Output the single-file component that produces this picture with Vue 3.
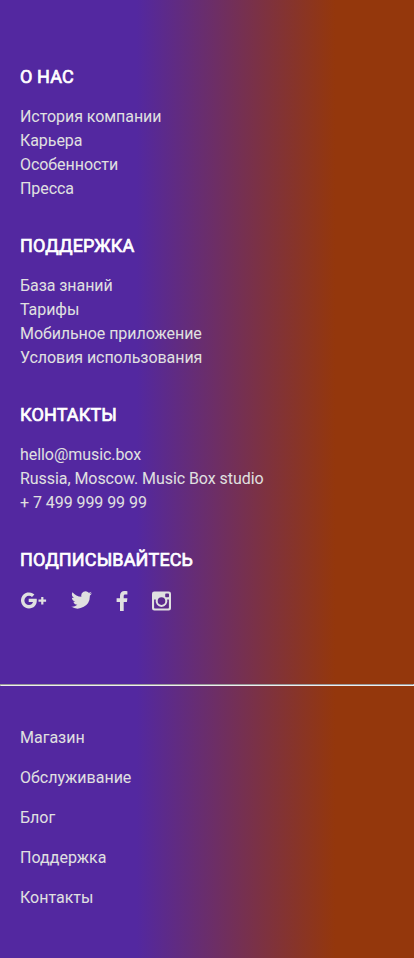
<script setup>
const groups = [
  { title: 'О нас', items: ['История компании', 'Карьера', 'Особенности', 'Пресса'] },
  { title: 'Поддержка', items: ['База знаний', 'Тарифы', 'Мобильное приложение', 'Условия использования'] },
  { title: 'Контакты', items: ['hello@music.box', 'Russia, Moscow. Music Box studio', '+ 7 499 999 99 99'] },
]
const nav = ['Магазин', 'Обслуживание', 'Блог', 'Поддержка', 'Контакты']
</script>

<template>
  <footer class="footer">
    <div class="top">
      <section v-for="g in groups" :key="g.title" class="group">
        <h4>{{ g.title }}</h4>
        <ul><li v-for="i in g.items" :key="i">{{ i }}</li></ul>
      </section>
      <section>
        <h4>Подписывайтесь</h4>
        <div class="social">
          <svg class="google" width="27" height="17" viewBox="0 0 27 17"><path d="M8.700 6.800v3.300h4.300C12.500 12 11 13 9 13A4.600 4.600 0 0 1 9 3.800c1.200 0 2.200.4 3 1.100l2.400-2.400A8 8 0 1 0 9 16.400c4.700 0 7.800-3.200 7.800-7.900 0-.6 0-1.200-.1-1.700ZM21.200 4.900v2.600h-2.700v2.200h2.700v2.700h2.200V9.700h2.700V7.500h-2.700V4.900Z"/></svg>
          <svg class="twitter" width="21" height="18" viewBox="0 0 24 20"><path d="M24 2.400c-.9.400-1.800.700-2.800.800 1-.6 1.800-1.600 2.200-2.700-1 .6-2 1-3.100 1.200A4.900 4.900 0 0 0 11.900 6.200C7.800 6 4.200 4 1.700 1c-1.300 2.200-.7 5.100 1.500 6.600-.8 0-1.600-.2-2.200-.6-.1 2.300 1.600 4.400 3.900 4.900-.7.200-1.500.2-2.200.1.600 2 2.400 3.400 4.600 3.400A9.900 9.900 0 0 1 0 17.500 14 14 0 0 0 21.500 5c1-.7 1.800-1.600 2.500-2.600Z"/></svg>
          <svg class="facebook" width="12" height="20" viewBox="0 0 12 20"><path d="M4 20v-9H.6V7.300H4V4.700C4 1.600 5.800 0 8.500 0c1.400 0 2.500.1 2.900.2v3.300H9.500c-1.500 0-1.800.7-1.800 1.700v2.100h3.700l-.5 3.700H7.700v9Z"/></svg>
          <svg class="instagram" width="19" height="20" viewBox="0 0 19 20"><path fill-rule="evenodd" d="M2.300.5h14.400A2.300 2.300 0 0 1 19 2.800v14.400a2.300 2.300 0 0 1-2.300 2.300H2.300A2.300 2.300 0 0 1 0 17.200V2.800A2.300 2.300 0 0 1 2.300.5ZM14 2.600c-.5 0-.8.300-.8.800v2.100c0 .5.300.800.800.800h2.200c.5 0 .8-.3.800-.8V3.400c0-.5-.3-.8-.8-.8ZM2.100 8.500v8.200c0 .4.300.7.700.7h13.400c.4 0 .7-.3.700-.7V8.500h-1.700A5.900 5.900 0 1 1 3.800 8.500ZM9.500 6.300a3.800 3.800 0 1 0 0 7.600 3.800 3.800 0 0 0 0-7.600Z"/></svg>
        </div>
      </section>
    </div>
    <hr>
    <nav><a v-for="n in nav" :key="n">{{ n }}</a></nav>
  </footer>
</template>

<style>
body { margin: 0; }
</style>
<style scoped>
.footer { box-sizing: border-box; min-height: 958px; padding-top: 64px; background: linear-gradient(90deg, #5328a0 33%, #94370c 81%); font: 16px/24px Roboto, sans-serif; color: #e0e0e0; }
.top { height: 620px; padding: 0 20px; }
.group { margin-bottom: 32px; }
h4 { margin: 0 0 16px; font-size: 18px; line-height: 25px; font-weight: 400; letter-spacing: .13px; -webkit-text-stroke: .7px #fff; text-transform: uppercase; color: #fff; }
ul { list-style: none; margin: 0; padding: 0; letter-spacing: -.06px; }
.social { display: flex; align-items: flex-start; padding-top: 3px; fill: #e0e0e0; }
.google { margin-top: 1px; }
.twitter, .facebook, .instagram { margin-left: 24px; }
hr { margin: 0; border: 1px inset #eee; }
nav { display: flex; flex-direction: column; gap: 16px; padding: 40px 20px 37px; }
</style>
